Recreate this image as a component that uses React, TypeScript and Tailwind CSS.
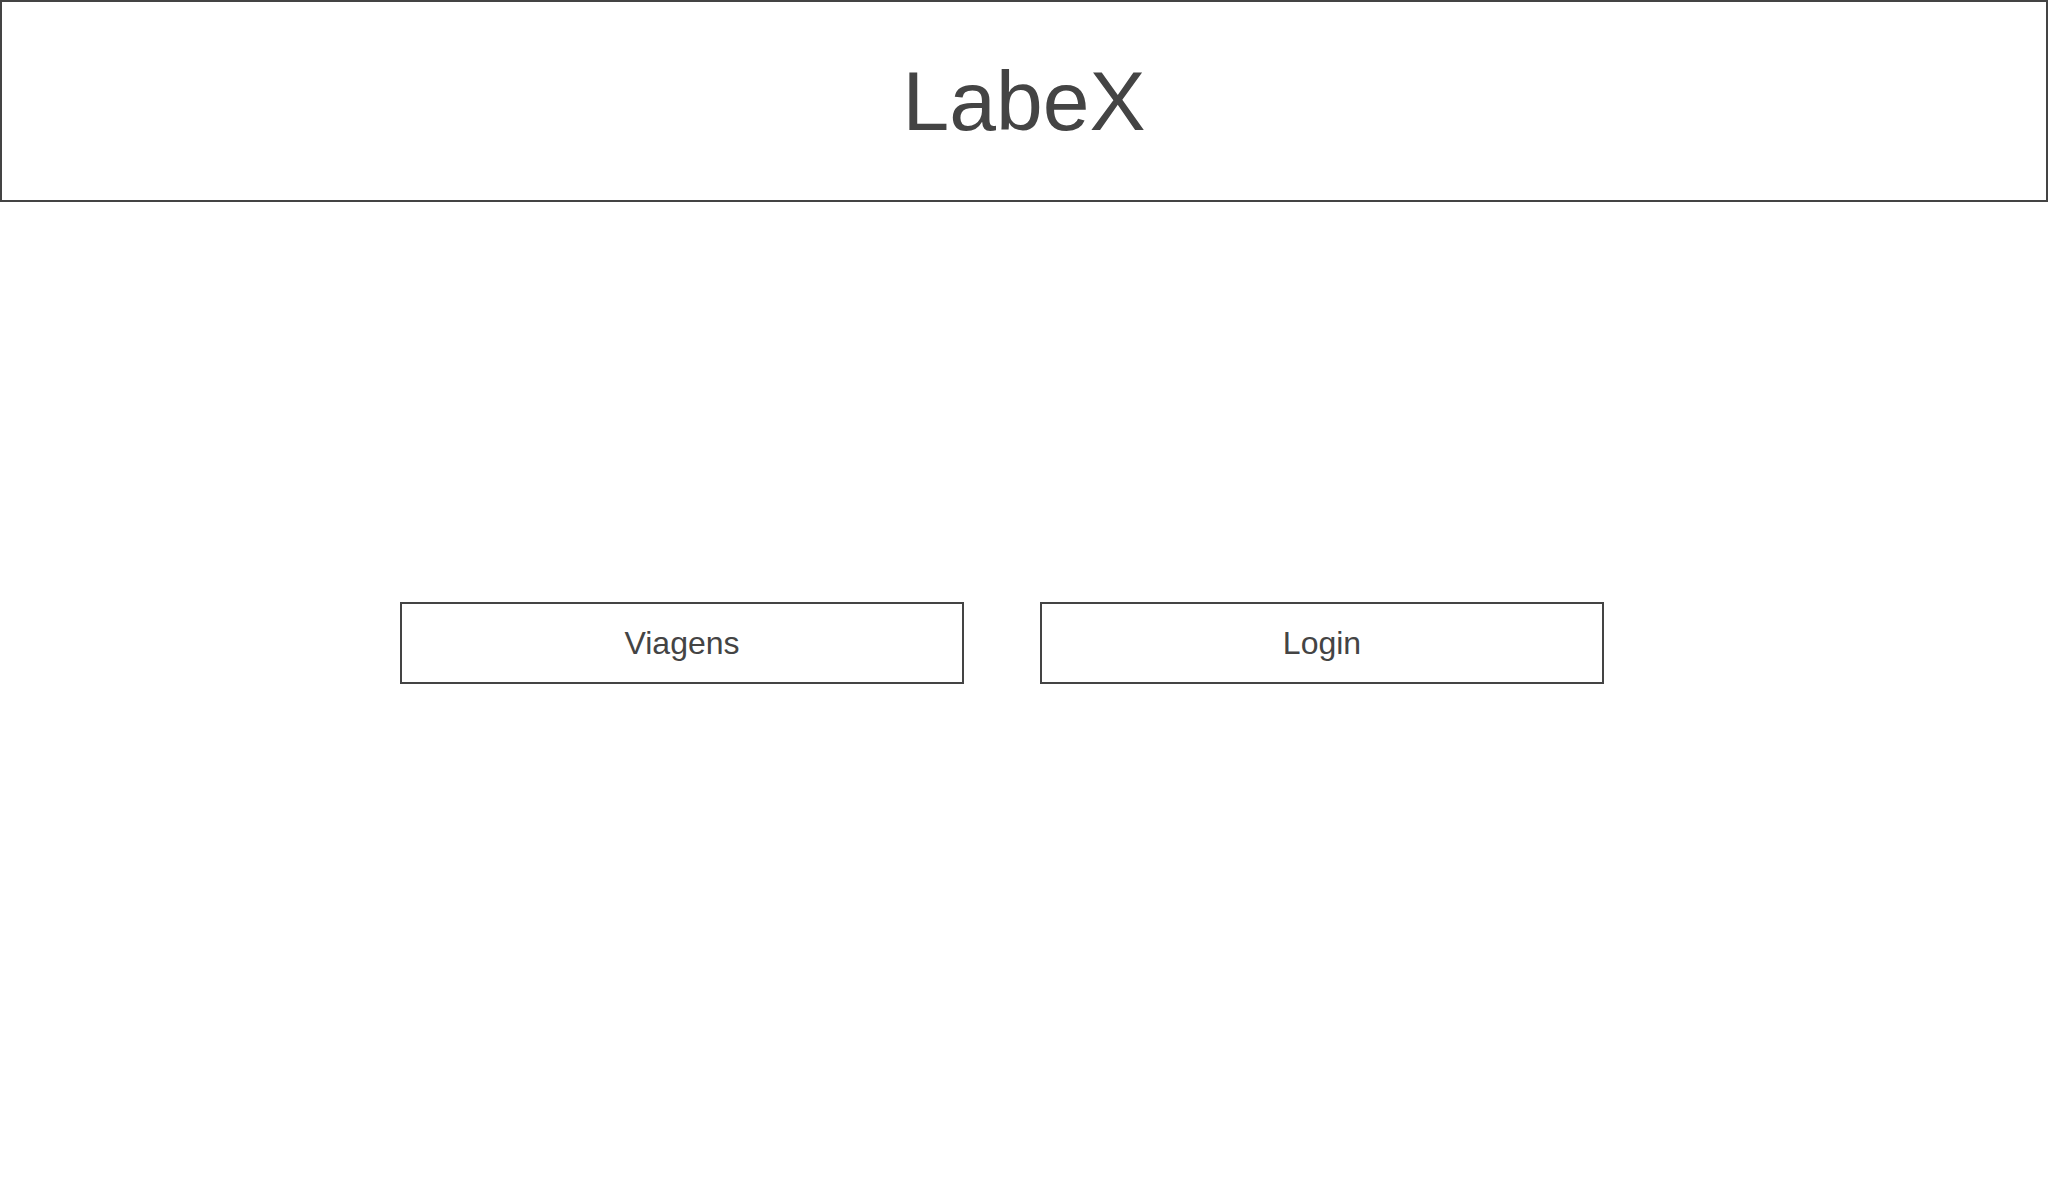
export default function App() {
  return (
    <div className="min-h-screen bg-white text-[#444444]" style={{ fontFamily: '"Liberation Sans", Arial, sans-serif' }}>
      <header className="h-[202px] border-2 border-[#444444] flex items-center justify-center">
        <h1 className="text-[84px] leading-none font-normal">LabeX</h1>
      </header>
      <main className="mt-[400px] pl-[400px] flex gap-[76px]">
        <button className="w-[564px] h-[82px] border-2 border-[#444444] text-[32px] leading-none bg-white">
          Viagens
        </button>
        <button className="w-[564px] h-[82px] border-2 border-[#444444] text-[32px] leading-none bg-white">
          Login
        </button>
      </main>
    </div>
  )
}
